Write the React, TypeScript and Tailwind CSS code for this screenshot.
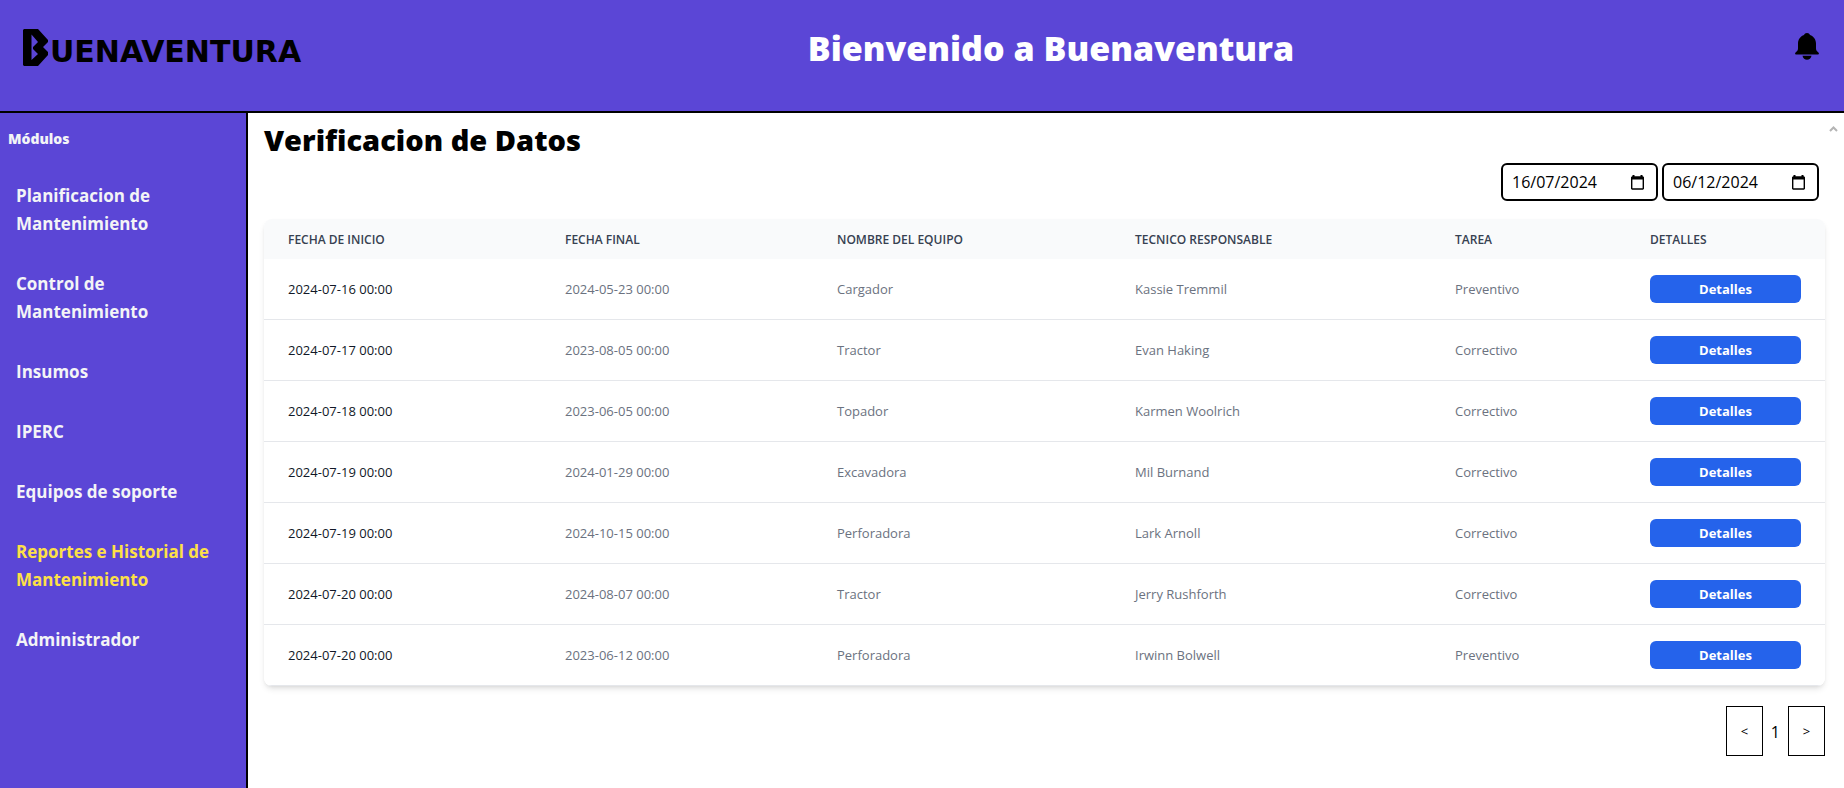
type Row = { start: string; end: string; equipment: string; technician: string; task: string };

const modules = [
  "Planificacion de Mantenimiento",
  "Control de Mantenimiento",
  "Insumos",
  "IPERC",
  "Equipos de soporte",
  "Reportes e Historial de Mantenimiento",
  "Administrador",
];
const activeModule = "Reportes e Historial de Mantenimiento";

const rows: Row[] = [
  { start: "2024-07-16 00:00", end: "2024-05-23 00:00", equipment: "Cargador", technician: "Kassie Tremmil", task: "Preventivo" },
  { start: "2024-07-17 00:00", end: "2023-08-05 00:00", equipment: "Tractor", technician: "Evan Haking", task: "Correctivo" },
  { start: "2024-07-18 00:00", end: "2023-06-05 00:00", equipment: "Topador", technician: "Karmen Woolrich", task: "Correctivo" },
  { start: "2024-07-19 00:00", end: "2024-01-29 00:00", equipment: "Excavadora", technician: "Mil Burnand", task: "Correctivo" },
  { start: "2024-07-19 00:00", end: "2024-10-15 00:00", equipment: "Perforadora", technician: "Lark Arnoll", task: "Correctivo" },
  { start: "2024-07-20 00:00", end: "2024-08-07 00:00", equipment: "Tractor", technician: "Jerry Rushforth", task: "Correctivo" },
  { start: "2024-07-20 00:00", end: "2023-06-12 00:00", equipment: "Perforadora", technician: "Irwinn Bolwell", task: "Preventivo" },
];

function Logo() {
  return (
    <a href="#" className="flex w-[284px] items-start gap-[2px] text-black" aria-label="Buenaventura">
      <svg className="shrink-0" width="25" height="37" viewBox="0 0 25 37" fill="currentColor" fillRule="evenodd" aria-hidden="true">
        <path d="M1 0H15L25 11V13L20 18L25 23V26L15 37H1L0 36V1ZM8.5 5.5V31L15 25L10 20V18L15 13Z" />
      </svg>
      <span className="pt-[5px] font-['DejaVu_Sans',sans-serif] text-[30px] leading-9 font-bold">UENAVENTURA</span>
    </a>
  );
}

function BellIcon() {
  return (
    <svg width="24" height="27" viewBox="0 0 24 27" fill="currentColor" aria-hidden="true">
      <path d="M12 0C13.5 0 14.6 .8 15 2C18.6 3.2 21 6.5 21 10.5V15.5C21 17.3 22 18.2 23.2 19.2C24.3 20.1 24.1 21.5 23 21.5H1C-.1 21.5 -.3 20.1 .8 19.2C2 18.2 3 17.3 3 15.5V10.5C3 6.5 5.4 3.2 9 2C9.4 .8 10.5 0 12 0Z" />
      <path d="M7.5 22.8H16.5C16 25.3 14.2 26.8 12 26.8S8 25.3 7.5 22.8Z" />
    </svg>
  );
}

function DateField({ label, value }: { label: string; value: string }) {
  return (
    <div className="flex h-[38px] w-[157px] items-center rounded-md border-2 border-black bg-white pr-3 pl-[9px]">
      <input aria-label={label} defaultValue={value} className="min-w-0 flex-1 text-[16px] leading-6 outline-none" />
      <button type="button" aria-label={`Abrir calendario: ${label}`}>
        <svg width="13" height="15" viewBox="0 0 13 15" fill="currentColor" aria-hidden="true">
          <path
            fillRule="evenodd"
            d="M1.5 0H3.5V1.3H9.5V0H11.5V1.3H12L13 2.3V13.7L12 14.7H1L0 13.7V2.3L1 1.3H1.5ZM1.4 4.5V13.3H11.6V4.5Z"
          />
        </svg>
      </button>
    </div>
  );
}

export default function App() {
  return (
    <div className="flex min-h-screen flex-col bg-white font-['Open_Sans',sans-serif] text-black">
      <header className="flex h-[113px] items-start justify-between border-b-2 border-black bg-[#5b46d6] pr-[25px] pl-[23px]">
        <div className="pt-[29px]">
          <Logo />
        </div>
        <h1 className="pt-7 text-[34px] leading-10 font-extrabold text-white">Bienvenido a Buenaventura</h1>
        <button type="button" aria-label="Notificaciones" className="pt-[33px]">
          <BellIcon />
        </button>
      </header>

      <div className="flex flex-1">
        <nav aria-label="Módulos" className="w-[248px] shrink-0 border-r-2 border-black bg-[#5b46d6] text-[#f3f4f6]">
          <h2 className="px-2 pt-4 text-[14px] leading-5 font-extrabold">Módulos</h2>
          <ul className="flex flex-col gap-8 px-4 pt-[33px]">
            {modules.map((name) => (
              <li key={name}>
                <a
                  href="#"
                  aria-current={name === activeModule ? "page" : undefined}
                  className={`block text-[17px] leading-7 font-bold ${name === activeModule ? "text-[#fde047]" : ""}`}
                >
                  {name}
                </a>
              </li>
            ))}
          </ul>
        </nav>

        <main className="min-w-0 flex-1 pt-[7px] pl-4">
          <h2 className="text-[29px] leading-10 font-extrabold">Verificacion de Datos</h2>
          <div className="flex justify-end gap-1 pt-[3px] pr-[6px]">
            <DateField label="Fecha de inicio" value="16/07/2024" />
            <DateField label="Fecha final" value="06/12/2024" />
          </div>

          <div className="mt-[18px] overflow-hidden rounded-lg shadow-md">
            <table className="w-full table-fixed text-left text-[13px] leading-5 text-[#6b7280]">
              <colgroup>
                <col className="w-[277px]" />
                <col className="w-[272px]" />
                <col className="w-[298px]" />
                <col className="w-[320px]" />
                <col className="w-[195px]" />
                <col className="w-[199px]" />
              </colgroup>
              <thead className="bg-[#f9fafb] text-[12px] leading-4 text-[#374151] uppercase">
                <tr>
                  {["Fecha de inicio", "Fecha final", "Nombre del equipo", "Tecnico responsable", "Tarea", "Detalles"].map((h) => (
                    <th key={h} scope="col" className="px-6 pt-[13px] pb-[11px] font-semibold">
                      {h}
                    </th>
                  ))}
                </tr>
              </thead>
              <tbody>
                {rows.map((r, i) => (
                  <tr key={i} className="border-b border-[#e5e7eb] bg-white">
                    <th scope="row" className="px-6 py-4 font-medium text-[#111827]">{r.start}</th>
                    <td className="px-6 py-4">{r.end}</td>
                    <td className="px-6 py-4">{r.equipment}</td>
                    <td className="px-6 py-4">{r.technician}</td>
                    <td className="px-6 py-4">{r.task}</td>
                    <td className="px-6 py-4">
                      <button type="button" className="block h-7 w-full rounded-md bg-[#2563eb] font-bold text-white">
                        Detalles
                      </button>
                    </td>
                  </tr>
                ))}
              </tbody>
            </table>
          </div>

          <div className="flex items-center justify-end gap-2 pt-5">
            <button type="button" aria-label="Página anterior" className="h-[50px] w-[37px] border border-black pt-[2px] text-[13px]">
              &lt;
            </button>
            <span className="pt-[2px] text-[16px] leading-6">1</span>
            <button type="button" aria-label="Página siguiente" className="h-[50px] w-[37px] border border-black pt-[2px] text-[13px]">
              &gt;
            </button>
          </div>
        </main>

        <div className="w-[19px] shrink-0 pt-3 pl-1">
          <svg width="9" height="8" viewBox="0 0 9 8" fill="none" stroke="#b4b4b4" strokeWidth="2" aria-hidden="true">
            <path d="M1 6L4.500 2.500L8 6" />
          </svg>
        </div>
      </div>
    </div>
  );
}
